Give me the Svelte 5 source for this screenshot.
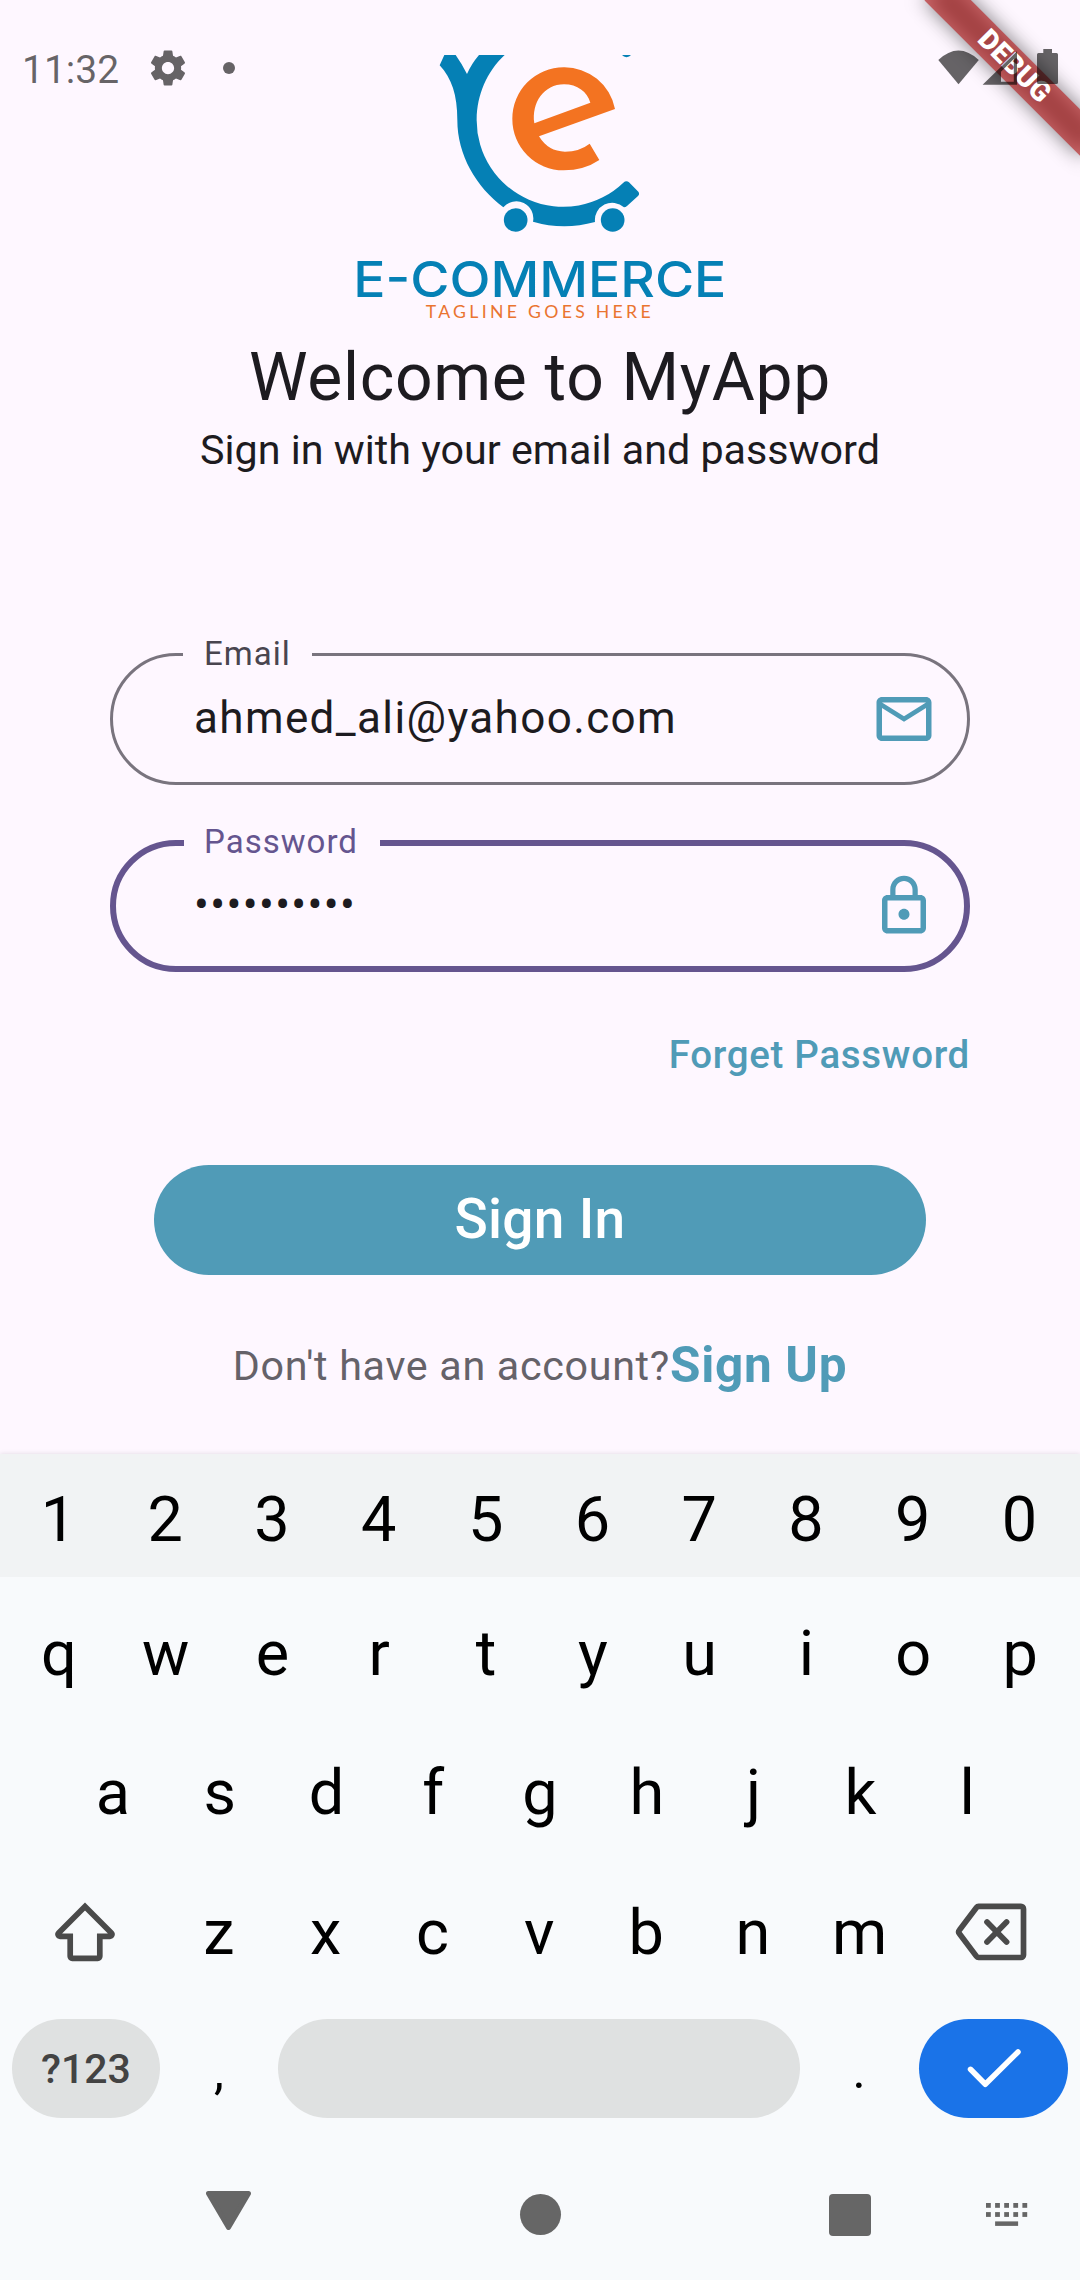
<script>
  const numberRow = [...'1234567890'];
  const topRow = [...'qwertyuiop'];
  const homeRow = [...'asdfghjkl'];
  const bottomRow = [...'zxcvbnm'];
  const keypadDots = [0, 1, 2, 3, 4];

  let email = $state('ahmed_ali@yahoo.com');
  let password = $state('••••••••••');
</script>

<div class="screen">
  <div class="banner-layer">
    <div class="banner-shadow"></div>
    <div class="banner">DEBUG</div>
  </div>

  <header class="status">
    <span class="time">11:32</span>
    <svg class="gear" viewBox="0 0 24 24"><path d="M19.43 12.98c.04-.32.07-.64.07-.98s-.03-.66-.07-.98l2.11-1.65c.19-.15.24-.42.12-.64l-2-3.46c-.12-.22-.39-.3-.61-.22l-2.49 1c-.52-.4-1.08-.73-1.69-.98l-.38-2.65C14.46 2.18 14.25 2 14 2h-4c-.25 0-.46.18-.49.42l-.38 2.65c-.61.25-1.17.59-1.69.98l-2.49-1c-.23-.09-.49 0-.61.22l-2 3.46c-.13.22-.07.49.12.64l2.11 1.65c-.04.32-.07.65-.07.98s.03.66.07.98l-2.11 1.65c-.19.15-.24.42-.12.64l2 3.46c.12.22.39.3.61.22l2.49-1c.52.4 1.08.73 1.69.98l.38 2.65c.03.24.24.42.49.42h4c.25 0 .46-.18.49-.42l.38-2.65c.61-.25 1.17-.59 1.69-.98l2.49 1c.23.09.49 0 .61-.22l2-3.46c.12-.22.07-.49-.12-.64l-2.11-1.65zM12 15.5c-1.93 0-3.5-1.57-3.5-3.5s1.57-3.5 3.5-3.5 3.5 1.57 3.5 3.5-1.57 3.5-3.5 3.5z" /></svg>
    <span class="dot"></span>
    <svg class="signals" viewBox="0 0 120 36">
      <path d="M0.3 10Q20.5 -9 40.8 10L20.5 34.3Z" />
      <path fill-rule="evenodd" d="M44.6 34.7L79 1.2V34.7ZM63 31.8H75.8V9L63 21.8Z" />
      <path d="M105.300 -1H114V3H118.500Q120 3 120 4.500V32.500Q120 34 118.500 34H100.500Q99 34 99 32.500V4.500Q99 3 100.500 3H105.300Z" />
    </svg>
  </header>

  <main>
    <svg class="logo" viewBox="0 45 1200 825">
      <g fill="#0580b5">
        <path d="M313 45L299 76C335 115 352 165 352 240C352 345 408 440 490 502A51 51 0 0 1 579 545Q670 572 765 546A52 52 0 0 1 852 502Q857 502 861 498L894 468Q900 462 895 455L867 427Q859 420 850 428A260 260 0 0 1 410 238C411 165 440 95 494 45H417Q394 72 381 102Q366 72 347 45Z" />
        <circle cx="527" cy="540" r="35.500" />
        <circle cx="818" cy="540" r="35.500" />
        <path d="M846 45Q851 51.500 859.500 51.500Q868 51.500 873 45Z" />
      </g>
      <path fill="#f37321" fill-rule="evenodd" d="M825 207A154 154 0 0 0 671 82A154 154 0 0 0 517 236A154 154 0 0 0 671 391Q732 391 778 360L749 311Q718 335 675 335Q625 335 597 289ZM583 250C574 188 612 133 672 133C712 133 742 156 751 188Z" />
      <text class="brand" x="40" y="770" textLength="1119" lengthAdjust="spacingAndGlyphs">E-COMMERCE</text>
      <text class="tagline" x="257" y="834" textLength="675" lengthAdjust="spacing">TAGLINE GOES HERE</text>
    </svg>

    <h1>Welcome to MyApp</h1>
    <p class="subtitle">Sign in with your email and password</p>

    <form>
      <div class="field">
        <span class="label">Email</span>
        <span class="value">{email}</span>
        <svg class="field-icon" viewBox="0 0 24 24"><path d="M22 6c0-1.100-.9-2-2-2H4c-1.100 0-2 .9-2 2v12c0 1.100.9 2 2 2h16c1.100 0 2-.9 2-2V6zm-2 0l-8 5-8-5h16zm0 12H4V8l8 5 8-5v10z" /></svg>
      </div>
      <div class="field focused">
        <span class="label">Password</span>
        <span class="value">{password}</span>
        <svg class="field-icon" viewBox="0 0 24 24"><path d="M12 17c1.100 0 2-.9 2-2s-.9-2-2-2-2 .9-2 2 .9 2 2 2zm6-9h-1V6c0-2.760-2.240-5-5-5S7 3.240 7 6v2H6c-1.100 0-2 .9-2 2v10c0 1.100.9 2 2 2h12c1.100 0 2-.9 2-2V10c0-1.100-.9-2-2-2zM8.900 6c0-1.710 1.390-3.100 3.100-3.100s3.100 1.390 3.100 3.100v2H8.900V6zM18 20H6V10h12v10z" /></svg>
      </div>
      <span class="forget">Forget Password</span>
      <button type="button" class="sign-in">Sign In</button>
    </form>

    <p class="signup">Don't have an account?<b>Sign Up</b></p>
  </main>

  <section class="keyboard">
    <div class="keys numbers">{#each numberRow as k}<span>{k}</span>{/each}</div>
    <div class="keys row-q">{#each topRow as k}<span>{k}</span>{/each}</div>
    <div class="keys row-a">{#each homeRow as k}<span>{k}</span>{/each}</div>
    <div class="keys row-z">
      <span class="wide">
        <svg class="shift" viewBox="0 0 62 60"><path d="M31 4.500L4.600 30.900c-1.200 1.200-.4 3.400 1.400 3.400H16.200V54.300a2 2 0 0 0 2 2h25.600a2 2 0 0 0 2-2V34.300H56c1.800 0 2.600-2.200 1.400-3.400Z" /></svg>
      </span>
      {#each bottomRow as k}<span>{k}</span>{/each}
      <span class="wide">
        <svg class="backspace" viewBox="0 0 72 60"><path d="M23.600 4.400H66a2.500 2.500 0 0 1 2.500 2.500V53a2.500 2.500 0 0 1-2.500 2.500H23.600Q22.300 55.500 21.500 54.400L4.300 31.500Q3 29.900 4.300 28.300L21.500 5.500Q22.300 4.400 23.600 4.400ZM32 20L51.600 40M51.600 20L32 40" /></svg>
      </span>
    </div>
    <div class="bottom-keys">
      <span class="pill symbols">?123</span>
      <span class="punct">,</span>
      <span class="pill space"></span>
      <span class="punct">.</span>
      <span class="pill enter">
        <svg viewBox="0 0 54 40"><path d="M3.500 21.300L18.300 36.300L51 4" /></svg>
      </span>
    </div>
  </section>

  <nav>
    <div class="nav-main">
      <svg class="back" viewBox="0 0 45 40"><path d="M2.500 2.500H42.500L22.500 36.500Z" /></svg>
      <span class="home"></span>
      <span class="recent"></span>
    </div>
    <svg class="ime" viewBox="0 0 42 23">
      {#each keypadDots as i}
        <rect x={i * 9.1} y="0" width="4.800" height="4.800" />
        <rect x={i * 9.1} y="9.100" width="4.800" height="4.800" />
      {/each}
      <rect x="9.100" y="18.400" width="23" height="4.500" />
    </svg>
  </nav>
</div>

<style>
  :global(body) {
    margin: 0;
  }
  .screen {
    position: relative;
    width: 1080px;
    height: 2280px;
    display: flex;
    flex-direction: column;
    overflow: hidden;
    background: #fef7ff;
    color: #1d1b20;
    font-family: Roboto, 'Liberation Sans', sans-serif;
  }

  /* Corner ribbon */
  .banner-layer {
    position: absolute;
    top: 0;
    right: 0;
    width: 240px;
    height: 240px;
    overflow: hidden;
  }
  .banner,
  .banner-shadow {
    position: absolute;
    left: 64px;
    top: 49.6px;
    width: 220px;
    height: 33px;
    transform: rotate(45deg);
  }
  .banner-shadow {
    background: rgba(0, 0, 0, 0.5);
    filter: blur(10px);
  }
  .banner {
    background: rgba(183, 28, 28, 0.627);
    color: #fff;
    font-size: 28px;
    font-weight: 900;
    line-height: 32px;
    text-align: center;
  }

  /* Status bar */
  .status {
    position: absolute;
    inset: 0 0 auto 0;
    height: 136px;
    box-sizing: border-box;
    padding: 0 22px;
    display: flex;
    align-items: center;
    color: rgba(0, 0, 0, 0.6);
  }
  .status svg {
    fill: currentColor;
  }
  .time {
    width: 125px;
    font-size: 39px;
    line-height: 46px;
    padding-top: 4px;
  }
  .gear {
    width: 42px;
    height: 42px;
  }
  .dot {
    width: 12px;
    height: 12px;
    margin-left: 34px;
    border-radius: 50%;
    background: currentColor;
  }
  .signals {
    width: 120px;
    height: 36px;
    margin-left: auto;
    overflow: visible;
  }

  main {
    height: 1399px;
    padding-top: 55px;
    display: flex;
    flex-direction: column;
    align-items: center;
  }
  .logo {
    width: 400px;
    height: 275px;
  }
  .brand {
    font: 500 148px Inter, sans-serif;
    fill: #0580b5;
  }
  .tagline {
    font: 400 53px Lato, sans-serif;
    fill: #ea7430;
  }
  h1 {
    margin: 3px 0 0;
    font-size: 66px;
    font-weight: 400;
    line-height: 90px;
    letter-spacing: 0.69px;
  }
  .subtitle {
    margin: 0;
    font-size: 41.25px;
    line-height: 54px;
    letter-spacing: 0;
  }

  form {
    width: 860px;
    margin-top: 176px;
    display: flex;
    flex-direction: column;
    align-items: center;
  }
  .field {
    position: relative;
    width: 100%;
    height: 132px;
    box-sizing: border-box;
    padding: 0 30.500px 0 81px;
    border: 3px solid #79747e;
    border-radius: 66px;
    display: flex;
    align-items: center;
    justify-content: space-between;
  }
  .focused {
    margin-top: 55px;
    padding: 0 27.500px 0 78px;
    border: 6px solid #65558f;
  }
  .label {
    position: absolute;
    left: 70px;
    top: -22px;
    padding: 0 21px;
    background: #fef7ff;
    color: #49454f;
    font-size: 33px;
    line-height: 40px;
    letter-spacing: 1.03px;
  }
  .focused .label {
    left: 68px;
    top: -24px;
    padding: 0 21.500px 0 20px;
    color: #65558f;
  }
  .value {
    font-size: 44px;
    line-height: 66px;
    letter-spacing: 1.38px;
    padding-bottom: 2px;
  }
  .field-icon {
    width: 66px;
    height: 66px;
    fill: #509bb7;
  }
  .forget {
    align-self: flex-end;
    margin-top: 58px;
    color: #509bb7;
    font-size: 38.5px;
    font-weight: 500;
    line-height: 50px;
    letter-spacing: 0.69px;
  }
  .sign-in {
    width: 772px;
    height: 110px;
    margin-top: 85px;
    padding: 0 0 2px;
    border: 0;
    border-radius: 55px;
    background: #509bb7;
    color: #fff;
    font: 500 55px/108px Roboto, sans-serif;
    letter-spacing: 0.3px;
  }
  .signup {
    display: flex;
    margin: 61px 0 0;
    color: #656269;
    font-size: 41.25px;
    line-height: 61px;
    letter-spacing: 0.69px;
  }
  .signup b {
    color: #509bb7;
    font-size: 49.5px;
    font-weight: 700;
    line-height: 58px;
    letter-spacing: 0.69px;
  }

  /* Keyboard */
  .keyboard {
    height: 680px;
    flex: none;
    background: #f8fafc;
    color: #000;
    box-shadow: 0 0 5px rgba(0, 0, 0, 0.12);
    z-index: 1;
  }
  .keys {
    display: flex;
    box-sizing: border-box;
    height: 139.5px;
    padding: 14px 5px 0;
    font-size: 63px;
  }
  .keys span {
    width: 106.8px;
    display: flex;
    align-items: center;
    justify-content: center;
  }
  .keys .wide {
    width: 160.5px;
  }
  .numbers {
    height: 123px;
    padding-top: 7px;
    background: #f1f3f4;
  }
  .row-q {
    height: 139px;
    padding-left: 5.5px;
  }
  .row-a {
    padding: 14px 59.500px 0;
  }
  .row-z {
    height: 140px;
  }
  .shift {
    width: 62px;
    height: 60px;
    margin-bottom: 1px;
  }
  .backspace {
    width: 72px;
    height: 60px;
    margin: 0 4px 1px 0;
  }
  .shift path,
  .backspace path {
    fill: none;
    stroke: #4a4a4a;
    stroke-width: 5.7;
    stroke-linecap: round;
  }
  .bottom-keys {
    display: flex;
    align-items: center;
    height: 99px;
    margin-top: 23px;
    padding: 0 12px;
  }
  .pill {
    height: 99px;
    border-radius: 49.5px;
    background: #dfe1e1;
    display: flex;
    align-items: center;
    justify-content: center;
  }
  .symbols {
    width: 148px;
    box-sizing: border-box;
    padding-top: 2px;
    color: #434343;
    font-size: 41px;
    font-weight: 500;
    line-height: 48px;
  }
  .punct {
    width: 118px;
    text-align: center;
    font-size: 50px;
    line-height: 60px;
    padding-top: 5px;
  }
  .space {
    width: 522px;
  }
  .enter {
    width: 149px;
    margin-left: 1px;
    background: #1a73e8;
  }
  .enter svg {
    width: 54px;
    height: 40px;
    fill: none;
    stroke: #fff;
    stroke-width: 5.5;
    stroke-linecap: round;
    stroke-linejoin: round;
  }

  /* Navigation bar */
  nav {
    flex: 1;
    display: flex;
    align-items: flex-start;
    gap: 115px;
    padding: 57px 0 0 206px;
    background: #f8fafc;
    color: #666;
    z-index: 2;
  }
  .nav-main {
    display: flex;
    gap: 268.5px;
  }
  .back {
    width: 45px;
    height: 40px;
    fill: currentColor;
    stroke: currentColor;
    stroke-width: 5;
    stroke-linejoin: round;
  }
  .home {
    width: 41px;
    height: 41px;
    margin-top: 3px;
    border-radius: 50%;
    background: currentColor;
  }
  .recent {
    width: 41.5px;
    height: 41.5px;
    margin-top: 3px;
    border-radius: 4px;
    background: currentColor;
  }
  .ime {
    width: 42px;
    height: 23px;
    margin-top: 12px;
    fill: currentColor;
  }
</style>
